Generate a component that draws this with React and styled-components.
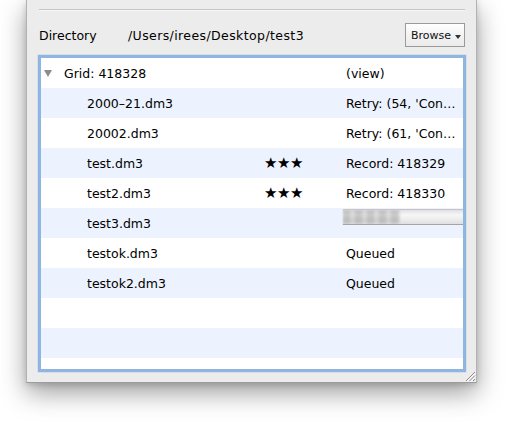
import React from "react";
import styled, { createGlobalStyle } from "styled-components";

const Global = createGlobalStyle`
  html, body { margin: 0; padding: 0; background: #ffffff; }
  body { font-family: "DejaVu Sans", "Liberation Sans", sans-serif; }
  #root { width: 515px; height: 430px; overflow: hidden; }
`;

const Stage = styled.div`
  width: 515px;
  height: 430px;
  padding-left: 26px;
  box-sizing: border-box;
`;

const Window = styled.div`
  position: relative;
  width: 451px;
  height: 383px;
  box-sizing: border-box;
  background: #ececec;
  border: 1px solid #b2b2b2;
  border-top: none;
  border-bottom-color: #9c9c9c;
  box-shadow: 0 10px 24px rgba(0, 0, 0, 0.38), 0 2px 6px rgba(0, 0, 0, 0.15);
  padding: 9px 11px 10px 12px;
  display: flex;
  flex-direction: column;
`;

const Separator = styled.div`
  height: 1px;
  background: #c6c6c6;
  box-shadow: 0 1px 0 #f6f6f6;
`;

const DirRow = styled.div`
  margin-top: 13px;
  height: 24px;
  display: flex;
  align-items: center;
  font-size: 12.5px;
  color: #000;
`;

const DirLabel = styled.span`
  width: 89px;
`;

const DirPath = styled.span`
  flex: 1;
  letter-spacing: 0.4px;
`;

const BrowseButton = styled.div`
  width: 60px;
  height: 24px;
  box-sizing: border-box;
  border: 1px solid #9a9a9a;
  background: linear-gradient(#ffffff, #f3f3f3 50%, #ebebeb);
  display: flex;
  align-items: center;
  justify-content: center;
  gap: 4px;
  font-size: 11px;
  color: #111;
  padding-left: 2px;
`;

const Caret = styled.span`
  width: 0;
  height: 0;
  border-left: 3.5px solid transparent;
  border-right: 3.5px solid transparent;
  border-top: 4px solid #333;
  margin-top: 4px;
`;

const TableFrame = styled.div`
  margin: 8px -1px 0 -1px;
  height: 317px;
  box-sizing: border-box;
  border: 3px solid #8fb5e3;
  box-shadow: inset 0 0 0 1px #739fd6, 0 0 1px #6f9bd0;
  background: #ffffff;
  overflow: hidden;
`;

const Row = styled.div`
  height: 30px;
  display: grid;
  grid-template-columns: 223px 78px 1fr;
  align-items: center;
  background: ${(p) => (p.$alt ? "#edf3fe" : "#ffffff")};
  font-size: 12.5px;
  color: #000;
  white-space: nowrap;
`;

const NameCell = styled.div`
  display: flex;
  align-items: center;
  padding-left: ${(p) => (p.$child ? "46px" : "3px")};
`;

const Disclosure = styled.span`
  width: 0;
  height: 0;
  border-left: 4px solid transparent;
  border-right: 4px solid transparent;
  border-top: 7px solid #8c8c8c;
  margin-right: 12px;
  margin-top: 1px;
`;

const Stars = styled.div`
  font-size: 15px;
  letter-spacing: -0.5px;
`;

const StatusCell = styled.div`
  padding-left: ${(p) => (p.$bar ? "1px" : "4px")};
  align-self: ${(p) => (p.$bar ? "start" : "center")};
  overflow: hidden;
`;

const ProgressTrack = styled.div`
  margin-top: 1px;
  width: 120px;
  height: 16px;
  box-sizing: border-box;
  border-top: 1px solid #c4c4c4;
  border-bottom: 1px solid #a4a4a4;
  background: linear-gradient(#e0e0e0, #f6f6f6 35%, #ececec 70%, #dedede);
  box-shadow: 0 1px 1px rgba(0, 0, 0, 0.25);
  display: flex;
  overflow: hidden;
`;

const ProgressFill = styled.div`
  height: 100%;
  background:
    repeating-linear-gradient(90deg, rgba(140,140,140,0.18) 0 7px, rgba(255,255,255,0.1) 7px 12px),
    linear-gradient(#c9c9c9, #d9d9d9 35%, #c8c8c8 70%, #cfcfcf);
  filter: blur(1.2px);
`;

const Grip = styled.svg`
  position: absolute;
  right: 0;
  bottom: 0;
`;

const rows = [
  { name: "Grid: 418328", parent: true, status: "(view)" },
  { name: "2000\u201321.dm3", status: "Retry: (54, 'Con\u2026" },
  { name: "20002.dm3", status: "Retry: (61, 'Con\u2026" },
  { name: "test.dm3", stars: "\u2605\u2605\u2605", status: "Record: 418329" },
  { name: "test2.dm3", stars: "\u2605\u2605\u2605", status: "Record: 418330" },
  { name: "test3.dm3", progress: 47.5 },
  { name: "testok.dm3", status: "Queued" },
  { name: "testok2.dm3", status: "Queued" },
  { empty: true },
  { empty: true },
  { empty: true },
];

export default function App() {
  return (
    <>
      <Global />
      <Stage>
        <Window>
          <Separator />
          <DirRow>
            <DirLabel>Directory</DirLabel>
            <DirPath>/Users/irees/Desktop/test3</DirPath>
            <BrowseButton>
              Browse <Caret />
            </BrowseButton>
          </DirRow>
          <TableFrame>
            {rows.map((r, i) => (
              <Row key={i} $alt={i % 2 === 1}>
                <NameCell $child={!r.parent}>
                  {r.parent && <Disclosure />}
                  {r.name}
                </NameCell>
                <Stars>{r.stars}</Stars>
                <StatusCell $bar={r.progress != null}>
                  {r.progress != null ? (
                    <ProgressTrack>
                      <ProgressFill style={{ width: `${r.progress}%` }} />
                    </ProgressTrack>
                  ) : (
                    r.status
                  )}
                </StatusCell>
              </Row>
            ))}
          </TableFrame>
          <Grip width="12" height="12" viewBox="0 0 12 12">
            <g stroke="#8a8a8a" strokeWidth="1">
              <line x1="2" y1="11" x2="11" y2="2" />
              <line x1="5.5" y1="11" x2="11" y2="5.5" />
              <line x1="9" y1="11" x2="11" y2="9" />
            </g>
            <g stroke="#ffffff" strokeWidth="1">
              <line x1="3" y1="11.5" x2="11.5" y2="3" />
              <line x1="6.5" y1="11.5" x2="11.5" y2="6.5" />
            </g>
          </Grip>
        </Window>
      </Stage>
    </>
  );
}
